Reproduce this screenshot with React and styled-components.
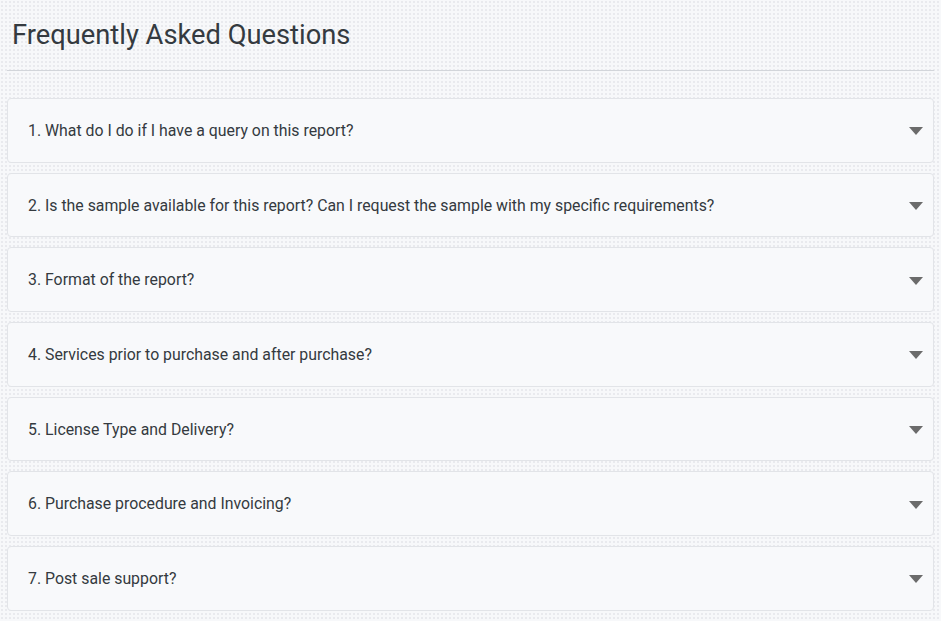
import React from 'react';
import styled, { createGlobalStyle } from 'styled-components';

const GlobalStyle = createGlobalStyle`
  html, body {
    margin: 0;
    padding: 0;
  }
  body {
    font-family: Roboto, "Liberation Sans", sans-serif;
    background-color: #f7f8fa;
    background-image: radial-gradient(#e9eaee 0.9px, transparent 1px);
    background-size: 4px 4px;
  }
`;

const questions = [
  '1. What do I do if I have a query on this report?',
  '2. Is the sample available for this report? Can I request the sample with my specific requirements?',
  '3. Format of the report?',
  '4. Services prior to purchase and after purchase?',
  '5. License Type and Delivery?',
  '6. Purchase procedure and Invoicing?',
  '7. Post sale support?',
];

const Wrapper = styled.section`
  padding: 0 7px;
`;

const Heading = styled.h2`
  margin: 0;
  padding: 19px 0 0 5px;
  height: 71px;
  box-sizing: border-box;
  font-size: 27.3px;
  font-weight: 400;
  line-height: 1.2;
  color: #343a40;
  border-bottom: 1px solid #d2d5da;
`;

const List = styled.div`
  display: flex;
  flex-direction: column;
  gap: 10px;
  margin-top: 27px;
`;

const Item = styled.div`
  display: flex;
  align-items: center;
  justify-content: space-between;
  height: 64.7px;
  box-sizing: border-box;
  padding: 0 10px 0 20px;
  background: #f8f9fb;
  border: 1px solid #e2e4e8;
  border-radius: 4px;
  font-size: 15.85px;
  color: #343a40;
  cursor: pointer;
`;

const Caret = styled.span`
  width: 0;
  height: 0;
  margin-top: 2px;
  border-left: 7.5px solid transparent;
  border-right: 7.5px solid transparent;
  border-top: 8px solid #6b6b6b;
`;

export default function App() {
  return (
    <Wrapper>
      <GlobalStyle />
      <Heading>Frequently Asked Questions</Heading>
      <List>
        {questions.map((q) => (
          <Item key={q}>
            <span>{q}</span>
            <Caret />
          </Item>
        ))}
      </List>
    </Wrapper>
  );
}
